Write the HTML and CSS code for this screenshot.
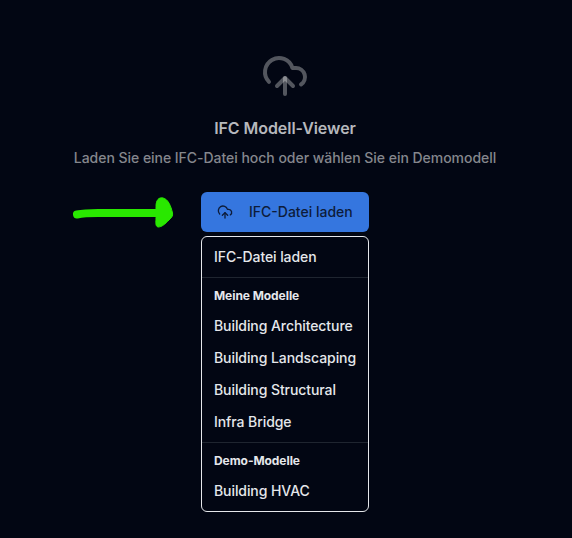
FILE: index.html
```html
<!DOCTYPE html>
<html lang="de">
<head>
<meta charset="utf-8">
<title>IFC Modell-Viewer</title>
<link rel="stylesheet" href="styles.css">
</head>
<body>
<main class="viewer">
  <svg class="hero-icon" viewBox="0 0 24 24"><path d="M12 13v8"/><path d="M4 14.899A7 7 0 1 1 15.71 8h1.79a4.5 4.5 0 0 1 2.5 8.242"/><path d="m8 17 4-4 4 4"/></svg>
  <h1 class="title">IFC Modell-Viewer</h1>
  <p class="subtitle">Laden Sie eine IFC-Datei hoch oder wählen Sie ein Demomodell</p>
  <div class="picker">
    <button class="load-button">
      <svg class="button-icon" viewBox="0 0 24 24"><path d="M12 13v8"/><path d="M4 14.899A7 7 0 1 1 15.71 8h1.79a4.5 4.5 0 0 1 2.5 8.242"/><path d="m8 17 4-4 4 4"/></svg>
      <span>IFC-Datei laden</span>
    </button>
    <svg class="arrow" viewBox="0 0 104 36"><path class="arrow-line" d="M7 19.5Q14 18 28 18H90"/><path class="arrow-head" d="M86 11C86 5 89 2 93 3C98 4 101 11 102.500 18C103 21 102 22 99 25C95 29 92 32 88 32C85 31 86 27 86 23Z"/></svg>
    <div class="menu">
      <div class="item">IFC-Datei laden</div>
      <div class="separator"></div>
      <div class="label">Meine Modelle</div>
      <div class="item">Building Architecture</div>
      <div class="item">Building Landscaping</div>
      <div class="item">Building Structural</div>
      <div class="item">Infra Bridge</div>
      <div class="separator"></div>
      <div class="label">Demo-Modelle</div>
      <div class="item">Building HVAC</div>
    </div>
  </div>
</main>
</body>
</html>
```
FILE: styles.css
```css
* { box-sizing: border-box; }
body {
  margin: 0;
  min-height: 538px;
  background: #020613;
  color: #e5e7eb;
  font-family: Inter, "Liberation Sans", sans-serif;
  font-size: 14px;
}
.viewer {
  display: flex;
  flex-direction: column;
  align-items: center;
  padding: 52px 2px 0 0;
}
svg {
  fill: none;
  stroke: currentColor;
  stroke-width: 2;
  stroke-linecap: round;
  stroke-linejoin: round;
}
.hero-icon {
  width: 48px;
  height: 48px;
  color: rgba(255, 255, 255, .32);
}
.title {
  margin: 16px 0 0;
  font-size: 16px;
  line-height: 24px;
  font-weight: 600;
  letter-spacing: -.06px;
  color: #b6b8bd;
}
.subtitle {
  margin: 8px 0 0;
  line-height: 20px;
  font-weight: 500;
  letter-spacing: -.035px;
  color: #85878d;
}
.picker {
  position: relative;
  width: 168px;
  margin-top: 24px;
}
.load-button {
  display: flex;
  align-items: center;
  gap: 16px;
  width: 100%;
  height: 40px;
  padding: 0 16px;
  border: 0;
  border-radius: 6px;
  background: #3576df;
  color: #0d1c3a;
  font: 500 14px/20px Inter, "Liberation Sans", sans-serif;
  white-space: nowrap;
}
.button-icon {
  flex: none;
  width: 16px;
  height: 16px;
}
.arrow {
  position: absolute;
  top: 3px;
  left: -131px;
  width: 104px;
  height: 36px;
  color: #29e800;
}
.arrow-line { stroke-width: 8; }
.arrow-head { fill: currentColor; stroke-width: 1; }
.menu {
  margin-top: 4px;
  padding: 4px 0;
  border: 1px solid #e5e7eb;
  border-radius: 6px;
}
.item {
  padding: 6px 12px;
  line-height: 20px;
  font-weight: 500;
  letter-spacing: -.08px;
  white-space: nowrap;
}
.label {
  padding: 6px 12px;
  font-size: 12px;
  line-height: 16px;
  font-weight: 700;
  letter-spacing: -.06px;
}
.separator {
  height: 1px;
  margin: 4px 0;
  background: #1f2530;
}
```
